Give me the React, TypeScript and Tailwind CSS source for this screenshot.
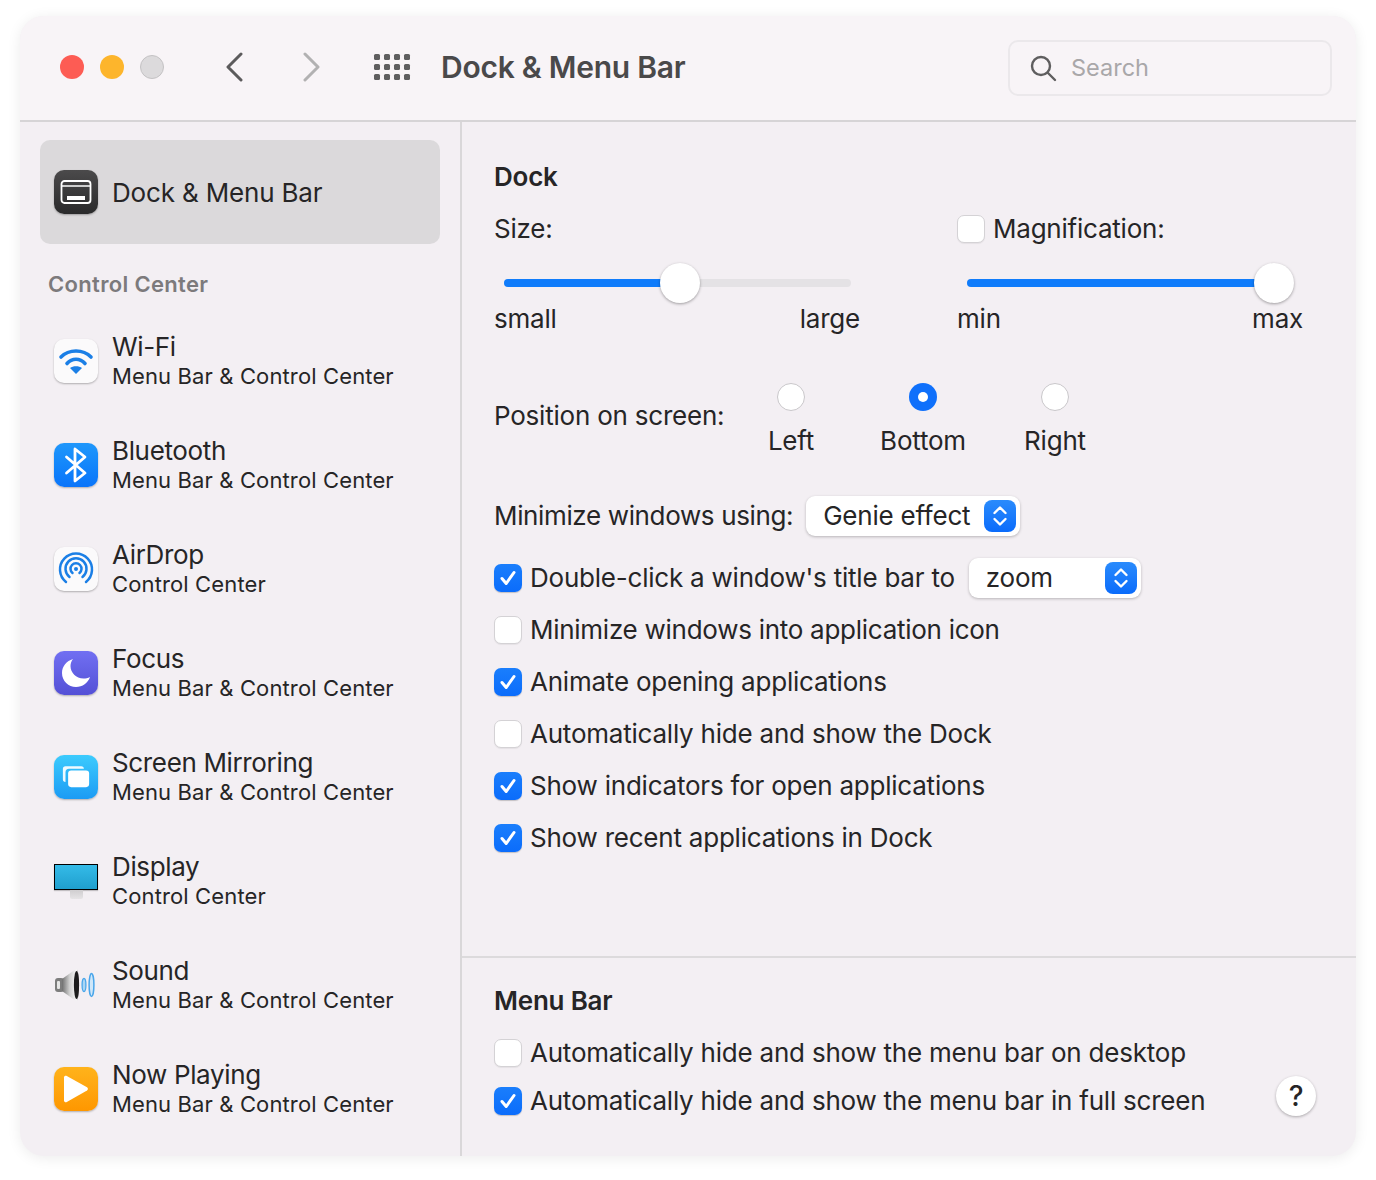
import React from 'react'

const FONT = 'font-["Inter","Noto_Sans",sans-serif]'

function Tile({ className, children }: { className: string; children: React.ReactNode }): React.ReactElement {
  return (
    <div className={`flex h-[44px] w-[44px] shrink-0 items-center justify-center rounded-[10px] shadow-[0_1px_2px_rgba(0,0,0,0.28)] ${className}`}>
      {children}
    </div>
  )
}

function DockIcon(): React.ReactElement {
  return (
    <Tile className="bg-linear-to-b from-[#4b4a4b] to-[#2a2a2b]">
      <svg width="32" height="26" viewBox="0 0 32 26" fill="none">
        <rect x="1.5" y="2" width="29" height="22" rx="3" stroke="#fff" strokeWidth="1.8" />
        <path d="M2 7h28" stroke="#fff" strokeWidth="1.6" />
        <rect x="7" y="17" width="18" height="4" fill="#fff" />
      </svg>
    </Tile>
  )
}

function WifiIcon(): React.ReactElement {
  return (
    <Tile className="bg-[#fbfafb]">
      <svg width="44" height="44" viewBox="0 0 44 44" fill="none" stroke="#1b7fe6" strokeLinecap="round" strokeWidth="3.6">
        <path d="M7 18C15 10 29 10 37 18" />
        <path d="M13 24.500C18 18.800 26 18.800 31 24.500" />
        <path d="M22 35l-6-6C19 26.500 25 26.500 28 29z" fill="#1b7fe6" stroke="none" />
      </svg>
    </Tile>
  )
}

function BluetoothIcon(): React.ReactElement {
  return (
    <Tile className="bg-linear-to-b from-[#1f97fb] to-[#0a74fa]">
      <svg width="44" height="44" viewBox="0 0 44 44" fill="none" stroke="#fff" strokeWidth="2.800" strokeLinejoin="round" strokeLinecap="round">
        <path d="M12.500 14L31 30l-10 8V6l10 8-18.500 16" />
      </svg>
    </Tile>
  )
}

function AirDropIcon(): React.ReactElement {
  return (
    <Tile className="bg-[#fbfafb]">
      <svg width="36" height="36" viewBox="0 0 36 36" fill="none" stroke="#1b7fe6" strokeWidth="2.500" strokeLinecap="round">
        <path d="M8 31a16 16 0 1 1 20 0" />
        <path d="M11.500 26a10.500 10.500 0 1 1 13 0" />
        <path d="M14.500 22a5.500 5.500 0 1 1 7 0" />
        <circle cx="18" cy="18" r="2" fill="#1b7fe6" stroke="none" />
      </svg>
    </Tile>
  )
}

function FocusIcon(): React.ReactElement {
  return (
    <Tile className="bg-linear-to-b from-[#716ff2] to-[#5450d6]">
      <svg width="32" height="32" viewBox="0 0 32 32">
        <path d="M13 2C6.500 4 2 9.500 2 16c0 8 6.500 14 14 14 6.500 0 12-4 14-10-2 1-4.500 1.500-6.500 1.500C16 21.500 10.500 15.500 10.500 9c0-2.500 1-5 2.500-7z" fill="#fff" />
      </svg>
    </Tile>
  )
}

function MirrorIcon(): React.ReactElement {
  return (
    <Tile className="bg-linear-to-b from-[#3ccbfd] to-[#1c9bf4]">
      <svg width="28" height="23" viewBox="0 0 32 26">
        <path d="M4 0h18a3 3 0 0 1 3 3H8a4 4 0 0 0-4 4v11a3 3 0 0 1-3-3V3a3 3 0 0 1 3-3z" fill="#fff" fillOpacity="0.92" />
        <rect x="7" y="5" width="24" height="19" rx="3.500" fill="#fff" />
      </svg>
    </Tile>
  )
}

function DisplayIcon(): React.ReactElement {
  return (
    <div className="flex h-[44px] w-[44px] shrink-0 flex-col items-center pt-[5px]">
      <div className="h-[26px] w-[44px] border border-black bg-linear-to-b from-[#34bbe8] to-[#1f9fce] shadow-[0_1px_1px_rgba(0,0,0,0.2)]" />
      <div className="h-[9px] w-[13px] rounded-b-[2px] bg-linear-to-b from-[#cfcdcf] to-[#e6e4e6]" />
    </div>
  )
}

function SoundIcon(): React.ReactElement {
  return (
    <div className="flex h-[44px] w-[44px] shrink-0 items-center justify-center">
      <svg width="44" height="36" viewBox="0 0 44 36" fill="none">
        <defs>
          <linearGradient id="horn" x1="0" y1="0" x2="1" y2="0">
            <stop offset="0" stopColor="#707070" />
            <stop offset="0.45" stopColor="#d0d0d0" />
            <stop offset="0.85" stopColor="#f7f7f7" />
            <stop offset="1" stopColor="#555" />
          </linearGradient>
        </defs>
        <rect x="1" y="11" width="9" height="14" rx="3" fill="#7d7d7d" />
        <rect x="3" y="14" width="3" height="8" rx="1" fill="#e6e6e6" />
        <path d="M8 12L22 2c2 0 3 7 3 16s-1 16-3 16L8 24z" fill="url(#horn)" />
        <ellipse cx="22.500" cy="18" rx="2.600" ry="14" fill="#1c1c1c" />
        <ellipse cx="30" cy="18" rx="1.900" ry="6.500" fill="#a9d6f5" stroke="#4aa6ea" strokeWidth="1.300" />
        <ellipse cx="37.500" cy="18" rx="2.400" ry="11.500" fill="#cfe7f9" stroke="#4aa6ea" strokeWidth="1.500" />
      </svg>
    </div>
  )
}

function PlayIcon(): React.ReactElement {
  return (
    <Tile className="bg-linear-to-b from-[#ffb31a] to-[#fe9700]">
      <svg width="26" height="28" viewBox="0 0 26 28">
        <path d="M1 2.500C1 1 2.500 0.300 3.800 1L24 12.300c1.200 0.700 1.200 2.500 0 3.200L3.800 27c-1.300 0.700-2.800-0.200-2.800-1.600z" fill="#fff" />
      </svg>
    </Tile>
  )
}

const rows: { icon: React.ReactNode; title: string; sub: string }[] = [
  { icon: <WifiIcon />, title: 'Wi-Fi', sub: 'Menu Bar & Control Center' },
  { icon: <BluetoothIcon />, title: 'Bluetooth', sub: 'Menu Bar & Control Center' },
  { icon: <AirDropIcon />, title: 'AirDrop', sub: 'Control Center' },
  { icon: <FocusIcon />, title: 'Focus', sub: 'Menu Bar & Control Center' },
  { icon: <MirrorIcon />, title: 'Screen Mirroring', sub: 'Menu Bar & Control Center' },
  { icon: <DisplayIcon />, title: 'Display', sub: 'Control Center' },
  { icon: <SoundIcon />, title: 'Sound', sub: 'Menu Bar & Control Center' },
  { icon: <PlayIcon />, title: 'Now Playing', sub: 'Menu Bar & Control Center' },
]

function Checkbox({ checked }: { checked: boolean }): React.ReactElement {
  if (checked) {
    return (
      <div className="flex h-[28px] w-[28px] shrink-0 items-center justify-center rounded-[7px] bg-linear-to-b from-[#1a7efc] to-[#0b6cfb] shadow-[0_1px_1px_rgba(0,0,0,0.2)]">
        <svg width="20" height="20" viewBox="0 0 20 20" fill="none" stroke="#fff" strokeWidth="3" strokeLinecap="round" strokeLinejoin="round">
          <path d="M4 10.500l4.200 5L16 4.500" />
        </svg>
      </div>
    )
  }
  return <div className="h-[28px] w-[28px] shrink-0 rounded-[7px] border border-[#d4d2d5] bg-white shadow-[0_1px_1px_rgba(0,0,0,0.06)]" />
}

function CheckRow({ checked, children, className }: { checked: boolean; children: React.ReactNode; className: string }): React.ReactElement {
  return (
    <div className={`flex items-center gap-[8px] ${className}`}>
      <Checkbox checked={checked} />
      {children}
    </div>
  )
}

function Slider({ width, fill, thumb }: { width: string; fill: string; thumb: string }): React.ReactElement {
  return (
    <div className={`relative h-[8px] rounded-full bg-[#e4e2e5] ${width}`}>
      <div className={`h-[8px] rounded-full bg-[#0f7cfb] ${fill}`} />
      <div className={`absolute top-[-16px] h-[40px] w-[40px] -translate-x-1/2 rounded-full bg-white shadow-[0_1px_3px_rgba(0,0,0,0.35)] ${thumb}`} />
    </div>
  )
}

function Stepper(): React.ReactElement {
  return (
    <div className="flex h-[32px] w-[32px] items-center justify-center rounded-[8px] bg-linear-to-b from-[#2a8bfc] to-[#0a6bfb]">
      <svg width="18" height="24" viewBox="0 0 18 24" fill="none" stroke="#fff" strokeWidth="2.400" strokeLinecap="round" strokeLinejoin="round">
        <path d="M3.500 9L9 3.500 14.500 9" />
        <path d="M3.500 15L9 20.500 14.500 15" />
      </svg>
    </div>
  )
}

function Radio({ on }: { on?: boolean }): React.ReactElement {
  if (on) {
    return (
      <div className="flex h-[28px] w-[28px] items-center justify-center rounded-full bg-[#0f70fb]">
        <div className="h-[10px] w-[10px] rounded-full bg-white" />
      </div>
    )
  }
  return <div className="h-[28px] w-[28px] rounded-full border border-[#c9c7ca] bg-white" />
}

export default function App(): React.ReactElement {
  return (
    <div className={`min-h-[1180px] bg-white pt-[16px] pl-[20px] text-[#262526] ${FONT}`}>
      <div className="flex h-[1140px] w-[1336px] flex-col overflow-hidden rounded-[24px] bg-[#f3eff3] shadow-[0_2px_14px_rgba(0,0,0,0.08)]">
        <header className="flex h-[106px] shrink-0 items-center border-b-2 border-[#d6d4d6] bg-[#f8f4f7] pb-[2px] pl-[40px]">
          <div className="h-[24px] w-[24px] rounded-full bg-[#fd5c54]" />
          <div className="ml-[16px] h-[24px] w-[24px] rounded-full bg-[#fdb52c]" />
          <div className="ml-[16px] h-[24px] w-[24px] rounded-full border border-[#c4c2c4] bg-[#dcdadc]" />
          <svg className="ml-[60px]" width="22" height="30" viewBox="0 0 22 30" fill="none" stroke="#5c5b5c" strokeWidth="3" strokeLinecap="round" strokeLinejoin="round">
            <path d="M17 2L4 15l13 13" />
          </svg>
          <svg className="ml-[54px]" width="22" height="30" viewBox="0 0 22 30" fill="none" stroke="#b2b1b2" strokeWidth="3" strokeLinecap="round" strokeLinejoin="round">
            <path d="M5 2l13 13L5 28" />
          </svg>
          <div className="ml-[52px] grid grid-cols-4 gap-[4px]">
            {Array.from({ length: 12 }).map((_, i) => (
              <div key={i} className="h-[6px] w-[6px] rounded-[1.500px] bg-[#5f5e5f]" />
            ))}
          </div>
          <h1 className="ml-[31px] text-[30px] font-semibold tracking-[-0.25px] text-[#4a494a]">Dock &amp; Menu Bar</h1>
          <div className="mt-[2px] mr-[24px] ml-auto flex h-[56px] w-[324px] items-center rounded-[10px] border-2 border-[#ebe8eb] pl-[19px]">
            <svg width="28" height="28" viewBox="0 0 28 28" fill="none" stroke="#5f5e5f" strokeWidth="2.400" strokeLinecap="round">
              <circle cx="12" cy="12" r="9" />
              <path d="M19 19l7 7" />
            </svg>
            <span className="ml-[14px] text-[23.5px] text-[#a9a7a9]">Search</span>
          </div>
        </header>

        <div className="flex min-h-0 flex-1">
          <aside className="w-[442px] shrink-0 border-r-2 border-[#d9d7d9] pt-[18px] pl-[20px]">
            <div className="flex h-[104px] w-[400px] items-center gap-[14px] rounded-[10px] bg-[#dbd9db] pl-[14px]">
              <DockIcon />
              <span className="text-[26px] tracking-[-0.17px]">Dock &amp; Menu Bar</span>
            </div>
            <div className="mt-[24px] pl-[8px] text-[22px] font-semibold tracking-[0.33px] text-[#7c7a7c]">Control Center</div>
            <div className="mt-[8px]">
              {rows.map((r) => (
                <div key={r.title} className="flex h-[104px] w-[400px] items-center gap-[14px] pl-[14px]">
                  {r.icon}
                  <div>
                    <div className="text-[26px] leading-[30px] tracking-[-0.35px]">{r.title}</div>
                    <div className="text-[22px] leading-[28px] tracking-[0.13px]">{r.sub}</div>
                  </div>
                </div>
              ))}
            </div>
          </aside>

          <main className="flex min-w-0 flex-1 flex-col">
            <section className="h-[836px] border-b-2 border-[#dcdadc] pt-[39px] pl-[32px] text-[26px] leading-[32px] tracking-[-0.22px]">
              <h2 className="font-semibold">Dock</h2>
              <div className="mt-[20px] flex">
                <div className="w-[463px]">
                  <div>Size:</div>
                  <div className="mt-[34px] pl-[10px]">
                    <Slider width="w-[347px]" fill="w-[176px]" thumb="left-[176px]" />
                  </div>
                  <div className="mt-[16px] flex w-[366px] justify-between">
                    <span>small</span>
                    <span>large</span>
                  </div>
                </div>
                <div>
                  <div className="flex items-center gap-[8px]">
                    <Checkbox checked={false} />
                    Magnification:
                  </div>
                  <div className="mt-[34px] pl-[10px]">
                    <Slider width="w-[327px]" fill="w-[307px]" thumb="left-[307px]" />
                  </div>
                  <div className="mt-[16px] flex w-[346px] justify-between">
                    <span>min</span>
                    <span>max</span>
                  </div>
                </div>
              </div>

              <div className="mt-[48px] flex">
                <div className="w-[234px] pt-[17px] whitespace-nowrap">Position on screen:</div>
                <div className="flex w-[126px] flex-col items-center">
                  <Radio />
                  <div className="mt-[14px]">Left</div>
                </div>
                <div className="flex w-[138px] flex-col items-center">
                  <Radio on />
                  <div className="mt-[14px]">Bottom</div>
                </div>
                <div className="flex w-[126px] flex-col items-center">
                  <Radio />
                  <div className="mt-[14px]">Right</div>
                </div>
              </div>

              <div className="mt-[39px] flex items-center gap-[13px]">
                <span className="tracking-[-0.36px]">Minimize windows using:</span>
                <div className="flex h-[40px] w-[214px] items-center justify-between rounded-[9px] bg-white pr-[4px] pl-[17px] shadow-[0_1px_3px_rgba(0,0,0,0.25)]">
                  <span>Genie effect</span>
                  <Stepper />
                </div>
              </div>

              <CheckRow checked className="mt-[21px] h-[42px]">
                <span>Double-click a window's title bar to</span>
                <div className="ml-[6px] flex h-[40px] w-[172px] items-center justify-between rounded-[9px] bg-white pr-[4px] pl-[17px] shadow-[0_1px_3px_rgba(0,0,0,0.25)]">
                  <span>zoom</span>
                  <Stepper />
                </div>
              </CheckRow>
              <CheckRow checked={false} className="mt-[15px]"><span className="tracking-[-0.27px]">Minimize windows into application icon</span></CheckRow>
              <CheckRow checked className="mt-[20px]"><span>Animate opening applications</span></CheckRow>
              <CheckRow checked={false} className="mt-[20px]"><span>Automatically hide and show the Dock</span></CheckRow>
              <CheckRow checked className="mt-[20px]"><span>Show indicators for open applications</span></CheckRow>
              <CheckRow checked className="mt-[20px]"><span>Show recent applications in Dock</span></CheckRow>
            </section>

            <section className="relative flex-1 pt-[27px] pl-[32px] text-[26px] leading-[32px] tracking-[-0.22px]">
              <h2 className="font-semibold">Menu Bar</h2>
              <CheckRow checked={false} className="mt-[20px]"><span>Automatically hide and show the menu bar on desktop</span></CheckRow>
              <CheckRow checked className="mt-[16px]"><span>Automatically hide and show the menu bar in full screen</span></CheckRow>
              <div className="absolute top-[118px] right-[40px] flex h-[40px] w-[40px] items-center justify-center rounded-full bg-white text-[28px] font-medium shadow-[0_1px_3px_rgba(0,0,0,0.3)]">?</div>
            </section>
          </main>
        </div>
      </div>
    </div>
  )
}
